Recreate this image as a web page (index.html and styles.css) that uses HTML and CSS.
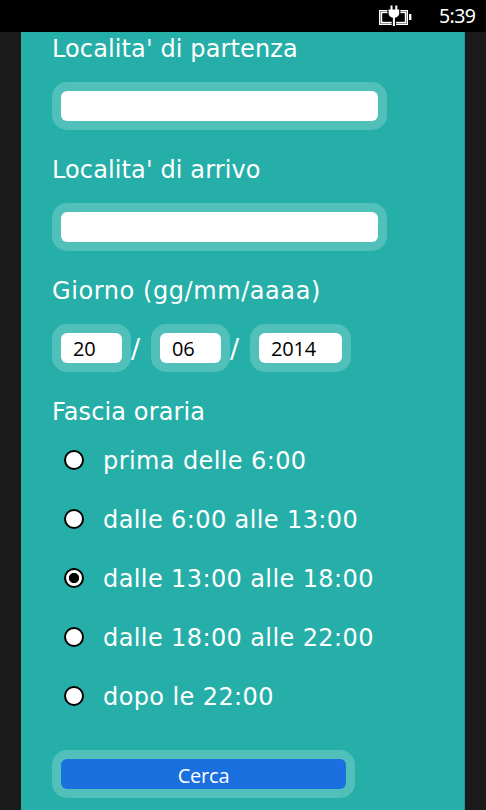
FILE: index.html
```html
<!DOCTYPE html>
<html lang="it">
<head>
<meta charset="UTF-8">
<title>Cerca</title>
<meta name="viewport" content="width=device-width, initial-scale=1">
<link rel="stylesheet" href="styles.css">
</head>

<body>
<div class="status-bar">
  <svg class="battery" viewBox="0 0 34 22" width="34" height="22">
    <path d="M0 6h29v15H0z" fill="#fff"/>
    <path d="M1 7h27v13H1z" fill="#666"/>
    <path d="M1.7 7.7h25.6v11.6H1.7z" fill="#fff"/>
    <path d="M3.2 9.2h22.6v8.6H3.2z" fill="#000"/>
    <path d="M30 10h2.4v6H30z" fill="#fff"/>
    <path d="M11.5 1.5h2v4h2.8v-4h2v4h1.9v4.2c0 1.8-1.9 3.4-4.3 4.1V22h-2v-8.2c-2.4-.7-4.3-2.3-4.3-4.1V5.5h1.9z" fill="#fff" stroke="#000" stroke-width="2.4" paint-order="stroke"/>
  </svg>
  <span class="clock">5:39</span>
</div>

<form class="container">
  <label class="title" for="partenza">Localita' di partenza</label>
  <input class="box place" type="text" id="partenza">

  <label class="title" for="arrivo">Localita' di arrivo</label>
  <input class="box place" type="text" id="arrivo">

  <label class="title wide" for="giorno">Giorno (gg/mm/aaaa)</label>
  <div class="date">
    <input class="box day" type="text" id="giorno" value="20">
    <span class="slash">/</span>
    <input class="box month" type="text" value="06">
    <span class="slash">/</span>
    <input class="box year" type="text" value="2014">
  </div>

  <div class="title">Fascia oraria</div>
  <div class="hours">
    <label><input type="radio" name="fascia"><span>prima delle 6:00</span></label>
    <label><input type="radio" name="fascia"><span>dalle 6:00 alle 13:00</span></label>
    <label><input type="radio" name="fascia" checked><span>dalle 13:00 alle 18:00</span></label>
    <label><input type="radio" name="fascia"><span>dalle 18:00 alle 22:00</span></label>
    <label><input type="radio" name="fascia"><span>dopo le 22:00</span></label>
  </div>

  <button class="box send" type="button">Cerca</button>
</form>
</body>
</html>
```
FILE: styles.css
```css
* {
  box-sizing: border-box;
}

body {
  margin: 0;
  height: 810px;
  overflow: hidden;
  background: #1a1a1a;
  font-family: "DejaVu Sans", Verdana, sans-serif;
  font-size: 24px;
  color: #fff;
}

/* phone status bar */
.status-bar {
  display: flex;
  justify-content: flex-end;
  align-items: center;
  height: 32px;
  padding-right: 10px;
  background: #000;
}
.battery {
  margin: 0 26px 2px 0;
}
.clock {
  width: 37px;
  font-family: "Noto Sans", "Open Sans", sans-serif;
  font-size: 19.5px;
  line-height: 32px;
  letter-spacing: -0.6px;
}

.container {
  width: 444px;
  height: 778px;
  margin-left: 21px;
  padding-left: 31px;
  background: #26afa9;
  border: solid #1f9a95;
  border-width: 0 1px 0 0;
}

.title {
  display: block;
  height: 50px;
  line-height: 34px;
  letter-spacing: 0.12px;
  white-space: nowrap;
}
.wide {
  letter-spacing: 0.58px;
}

/* white field with the translucent ring */
.box {
  display: block;
  height: 48px;
  margin: 0 0 23px;
  padding: 0 12px;
  border: 9px solid rgba(255,255,255,0.2);
  border-radius: 15px;
  background: #fff;
  background-clip: padding-box;
  font-family: "Open Sans", sans-serif;
  font-size: 20px;
  letter-spacing: -0.2px;
  color: #000;
  outline: none;
}
.place {
  width: 335px;
}

.date {
  display: flex;
  line-height: 50px;
}
.slash {
  width: 20px;
  font-size: 27px;
}
.day {
  width: 79px;
}
.month {
  width: 79px;
}
.year {
  width: 101px;
}

.hours {
  margin-top: -15px;
}
.hours label {
  display: flex;
  align-items: center;
  height: 59.2px;
  padding-left: 12px;
  white-space: nowrap;
}
.hours span {
  padding-top: 2px;
  letter-spacing: 0.4px;
}
.hours input {
  appearance: none;
  width: 20px;
  height: 20px;
  margin: 0 19px 0 0;
  border: 2px solid #000;
  border-radius: 50%;
  background: #fff;
}
.hours input:checked {
  background: radial-gradient(circle, #000 0 4.7px, #fff 5.5px);
}

.send {
  width: 303px;
  margin-top: 24px;
  padding-top: 3px;
  background-color: #1a70df;
  color: #fff;
}
```
